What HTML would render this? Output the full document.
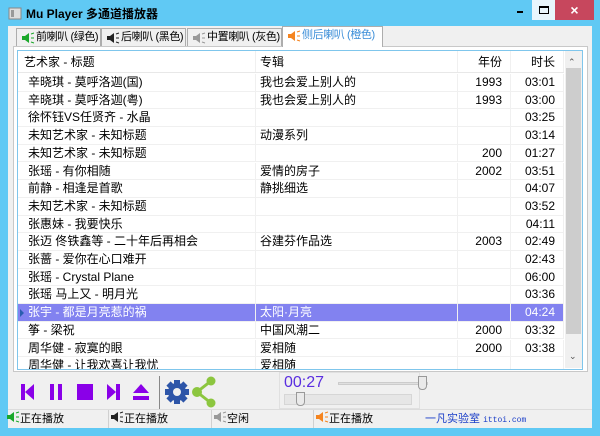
<!DOCTYPE html>
<html><head><meta charset="utf-8"><style>
*{margin:0;padding:0;box-sizing:border-box}
body{width:600px;height:436px;background:#60c9f4;font-family:"Liberation Sans","Noto Sans CJK SC",sans-serif;font-size:12px;color:#000;position:relative;overflow:hidden}
.abs{position:absolute}
.title{left:26px;top:5px;font-size:12px;font-weight:bold;color:#000}
.client{left:8px;top:26px;width:584px;height:402px;background:#f0f0f0}
.tab{top:28px;height:19px;border:1px solid #adadad;border-bottom:none;background:#f0f0f0;font-size:11px;letter-spacing:-0.4px;line-height:17px;padding-left:19px;white-space:nowrap;overflow:hidden}
.tab svg{position:absolute;left:4px;top:3px}
.panel{left:13px;top:46px;width:575px;height:326px;border:1px solid #c8c8c8;background:#fff}
.list{left:17px;top:50px;width:566px;height:320px;border:1px solid #7fc6ec;background:#fff;overflow:hidden}
.row{position:absolute;left:0;width:546px;height:17.7px;line-height:17.7px;border-bottom:1px solid #f0f0f0;white-space:nowrap}
.c{position:absolute;top:0;height:100%;overflow:hidden;border-right:1px solid #f0f0f0}
.c1{left:0;width:238px;padding-left:10px}
.c2{left:238px;width:202px;padding-left:4px}
.c3{left:440px;width:53px;text-align:right;padding-right:8px}
.c4{left:493px;width:53px;text-align:right;padding-right:8px}
.sel{background:#8282f0;color:#fff}
.sb{left:565px;top:51px;width:17px;height:317px;background:#f0f0f0}
.status{top:410px;height:18px;line-height:18px;font-size:11px;white-space:nowrap}
</style></head><body>
<svg class="abs" style="left:8px;top:6px" width="14" height="14"><rect x="1" y="2" width="12" height="11" fill="#ddd" stroke="#888"/><rect x="3" y="4" width="3" height="7" fill="#999"/></svg>
<div class="abs title">Mu Player 多通道播放器</div>
<div class="abs" style="left:517px;top:11px;width:6px;height:2px;background:#000"></div>
<div class="abs" style="left:532px;top:0;width:23px;height:20px;background:#e8f6fc"><div style="position:absolute;left:7px;top:6px;width:10px;height:8px;border:1px solid #000;border-top-width:2px"></div></div>
<div class="abs" style="left:555px;top:0;width:39px;height:20px;background:#c7475d;color:#fff;text-align:center;font-size:14px;line-height:20px;font-weight:bold">×</div>
<div class="abs client"></div>

<div class="abs tab" style="left:16px;width:85px"><svg width="14" height="12"><path d="M1 4h3l4-3v10l-4-3H1z" fill="#1aa82a"/><path d="M10 2l3-1M10 6h3M10 10l3 1" stroke="#1aa82a"/></svg>前喇叭 (绿色)</div>
<div class="abs tab" style="left:101px;width:85px"><svg width="14" height="12"><path d="M1 4h3l4-3v10l-4-3H1z" fill="#222"/><path d="M10 2l3-1M10 6h3M10 10l3 1" stroke="#222"/></svg>后喇叭 (黑色)</div>
<div class="abs tab" style="left:187px;width:95px"><svg width="14" height="12"><path d="M1 4h3l4-3v10l-4-3H1z" fill="#999"/><path d="M10 2l3-1M10 6h3M10 10l3 1" stroke="#999"/></svg>中置喇叭 (灰色)</div>
<div class="abs tab" style="left:282px;top:26px;height:21px;width:101px;background:#fff;color:#3b8ed8;z-index:2"><svg width="14" height="12"><path d="M1 4h3l4-3v10l-4-3H1z" fill="#f5841f"/><path d="M10 2l3-1M10 6h3M10 10l3 1" stroke="#f5841f"/></svg>侧后喇叭 (橙色)</div>
<div class="abs panel"></div>
<div class="abs list">
<div class="row" style="top:0;height:22px;line-height:22px;border-bottom:1px solid #e8e8e8"><div class="c c1" style="padding-left:6px">艺术家 - 标题</div><div class="c c2">专辑</div><div class="c c3">年份</div><div class="c c4">时长</div></div>
<div class="row" style="top:23px"><div class="c c1">辛晓琪 - 莫呼洛迦(国)</div><div class="c c2">我也会爱上别人的</div><div class="c c3">1993</div><div class="c c4">03:01</div></div>
<div class="row" style="top:40.7px"><div class="c c1">辛晓琪 - 莫呼洛迦(粤)</div><div class="c c2">我也会爱上别人的</div><div class="c c3">1993</div><div class="c c4">03:00</div></div>
<div class="row" style="top:58.4px"><div class="c c1">徐怀钰VS任贤齐 - 水晶</div><div class="c c2"></div><div class="c c3"></div><div class="c c4">03:25</div></div>
<div class="row" style="top:76.1px"><div class="c c1">未知艺术家 - 未知标题</div><div class="c c2">动漫系列</div><div class="c c3"></div><div class="c c4">03:14</div></div>
<div class="row" style="top:93.8px"><div class="c c1">未知艺术家 - 未知标题</div><div class="c c2"></div><div class="c c3">200</div><div class="c c4">01:27</div></div>
<div class="row" style="top:111.5px"><div class="c c1">张瑶 - 有你相随</div><div class="c c2">爱情的房子</div><div class="c c3">2002</div><div class="c c4">03:51</div></div>
<div class="row" style="top:129.2px"><div class="c c1">前静 - 相逢是首歌</div><div class="c c2">静挑细选</div><div class="c c3"></div><div class="c c4">04:07</div></div>
<div class="row" style="top:146.9px"><div class="c c1">未知艺术家 - 未知标题</div><div class="c c2"></div><div class="c c3"></div><div class="c c4">03:52</div></div>
<div class="row" style="top:164.6px"><div class="c c1">张惠妹 - 我要快乐</div><div class="c c2"></div><div class="c c3"></div><div class="c c4">04:11</div></div>
<div class="row" style="top:182.3px"><div class="c c1">张迈 佟铁鑫等 - 二十年后再相会</div><div class="c c2">谷建芬作品选</div><div class="c c3">2003</div><div class="c c4">02:49</div></div>
<div class="row" style="top:200px"><div class="c c1">张蔷 - 爱你在心口难开</div><div class="c c2"></div><div class="c c3"></div><div class="c c4">02:43</div></div>
<div class="row" style="top:217.7px"><div class="c c1">张瑶 - Crystal Plane</div><div class="c c2"></div><div class="c c3"></div><div class="c c4">06:00</div></div>
<div class="row" style="top:235.4px"><div class="c c1">张瑶 马上又 - 明月光</div><div class="c c2"></div><div class="c c3"></div><div class="c c4">03:36</div></div>
<div class="row sel" style="top:253.1px"><div class="c c1">张宇 - 都是月亮惹的祸</div><div class="c c2">太阳·月亮</div><div class="c c3"></div><div class="c c4">04:24</div></div>
<div class="row" style="top:270.8px"><div class="c c1">筝 - 梁祝</div><div class="c c2">中国风潮二</div><div class="c c3">2000</div><div class="c c4">03:32</div></div>
<div class="row" style="top:288.5px"><div class="c c1">周华健 - 寂寞的眼</div><div class="c c2">爱相随</div><div class="c c3">2000</div><div class="c c4">03:38</div></div>
<div class="row" style="top:306.2px"><div class="c c1">周华健 - 让我欢喜让我忧</div><div class="c c2">爱相随</div><div class="c c3"></div><div class="c c4"></div></div>
</div>
<div class="abs" style="left:20px;top:309px;width:0;height:0;border-left:4px solid #2a5db0;border-top:4px solid transparent;border-bottom:4px solid transparent"></div>
<div class="abs sb"><div style="position:absolute;left:3px;top:6px;font-size:9px;color:#555">⌃</div><div style="position:absolute;left:1px;top:17px;width:15px;height:266px;background:#cdcdcd"></div><div style="position:absolute;left:4px;top:300px;font-size:9px;color:#555">⌄</div></div>

<svg class="abs" style="left:18px;top:376px" width="240" height="34">
<g fill="#8a00e8">
<rect x="3" y="8" width="4" height="16"/><path d="M16 8v16l-9-8z"/>
<rect x="32" y="8" width="4" height="16"/><rect x="40" y="8" width="4" height="16"/>
<rect x="59" y="8" width="16" height="16"/>
<path d="M89 8v16l9-8z"/><rect x="98" y="8" width="4" height="16"/>
<path d="M115 17l8-9 8 9z"/><rect x="115" y="20" width="16" height="4"/>
</g>
<rect x="141" y="0" width="1" height="33" fill="#888"/>
<g transform="translate(159,16)" fill="#2d55a8"><circle r="9"/><g><rect x="-3" y="-12" width="6" height="24"/><rect x="-12" y="-3" width="24" height="6"/><rect x="-3" y="-12" width="6" height="24" transform="rotate(45)"/><rect x="-3" y="-12" width="6" height="24" transform="rotate(-45)"/></g><circle r="4" fill="#f0f0f0"/></g>
<g stroke="#8cc63f" stroke-width="3" fill="#8cc63f"><line x1="179" y1="16" x2="193" y2="5"/><line x1="179" y1="16" x2="193" y2="27"/><circle cx="179" cy="16" r="3.5"/><circle cx="193" cy="5" r="3"/><circle cx="193" cy="27" r="3"/></g>
</svg>
<div class="abs" style="left:279px;top:372px;width:141px;height:37px;border:1px solid #e0e0e0"></div>
<div class="abs" style="left:284px;top:374px;font-size:16px;color:#5a2ee0">00:27</div>
<div class="abs" style="left:338px;top:382px;width:90px;height:3px;background:#e0e0e0;border:1px solid #ccc"></div>
<div class="abs" style="left:418px;top:376px;width:9px;height:14px;background:#eaeaea;border:1px solid #999;border-radius:0 0 4px 4px"></div>
<div class="abs" style="left:284px;top:394px;width:128px;height:11px;background:#e6e6e6;border:1px solid #d6d6d6"></div>
<div class="abs" style="left:296px;top:392px;width:9px;height:14px;background:#eaeaea;border:1px solid #999;border-radius:0 0 4px 4px"></div>

<div class="abs" style="left:8px;top:409px;width:584px;height:1px;background:#dcdcdc"></div>
<div class="abs status" style="left:6px"><svg width="14" height="12" style="vertical-align:-1px"><path d="M1 4h3l4-3v10l-4-3H1z" fill="#1aa82a"/><path d="M10 2l3-1M10 6h3M10 10l3 1" stroke="#1aa82a"/></svg>正在播放</div>
<div class="abs" style="left:108px;top:410px;width:1px;height:18px;background:#d0d0d0"></div>
<div class="abs status" style="left:110px"><svg width="14" height="12" style="vertical-align:-1px"><path d="M1 4h3l4-3v10l-4-3H1z" fill="#222"/><path d="M10 2l3-1M10 6h3M10 10l3 1" stroke="#222"/></svg>正在播放</div>
<div class="abs" style="left:211px;top:410px;width:1px;height:18px;background:#d0d0d0"></div>
<div class="abs status" style="left:213px"><svg width="14" height="12" style="vertical-align:-1px"><path d="M1 4h3l4-3v10l-4-3H1z" fill="#999"/><path d="M10 2l3-1M10 6h3M10 10l3 1" stroke="#999"/></svg>空闲</div>
<div class="abs" style="left:313px;top:410px;width:1px;height:18px;background:#d0d0d0"></div>
<div class="abs status" style="left:315px"><svg width="14" height="12" style="vertical-align:-1px"><path d="M1 4h3l4-3v10l-4-3H1z" fill="#f5841f"/><path d="M10 2l3-1M10 6h3M10 10l3 1" stroke="#f5841f"/></svg>正在播放</div>
<div class="abs status" style="left:425px;color:#1a3ec8">一凡实验室 <span style="font-family:'Liberation Mono',monospace;font-size:8px">ittoi.com</span></div>
</body></html>
